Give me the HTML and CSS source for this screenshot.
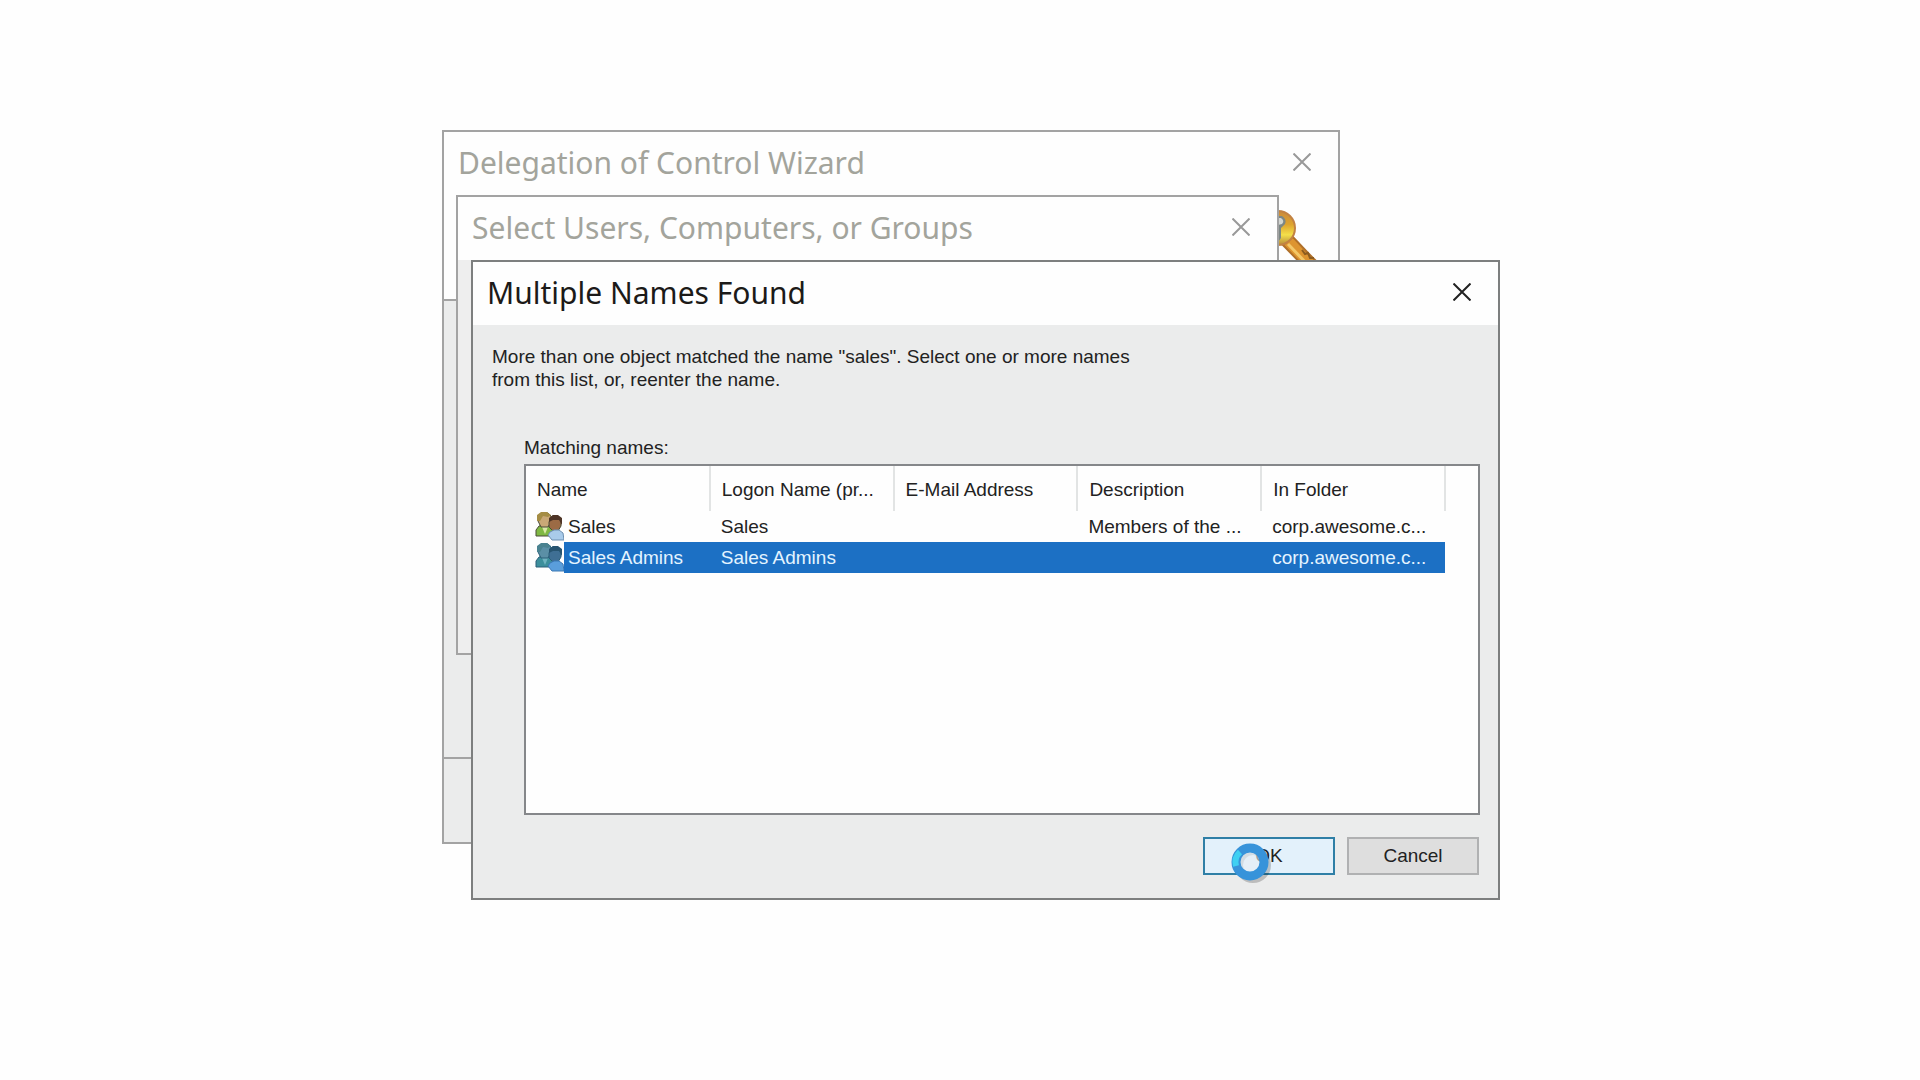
FILE: index.html
```html
<!DOCTYPE html>
<html lang="en">
<head>
<meta charset="utf-8">
<title>Multiple Names Found</title>
<link rel="stylesheet" href="styles.css">
</head>
<body>
<svg class="defs" aria-hidden="true">
  <symbol id="cross" viewBox="0 0 18 18"><path d="M0.5 0.5 L17.5 17.5 M17.5 0.5 L0.5 17.5" fill="none" stroke="currentColor" stroke-width="2"/></symbol>
  <symbol id="people" viewBox="0 0 29 29">
    <path d="M1 24V18l3-4 4-1h7l4 4 1 7z" fill="var(--shirt)" stroke="var(--line)" stroke-width="1"/>
    <path d="M7 15l3 7 3-7z" fill="var(--collar)"/>
    <path d="M3 9V4l3-3h7l3 3v6l-3 5H6z" fill="var(--skin)" stroke="var(--line)" stroke-width="1"/>
    <path d="M2 9V3l4-3h6l4 3-3 2-5-1-3 5z" fill="var(--hair)"/>
    <path d="M14 10l3-6h6l3 4v6l-3 5h-5l-4-4z" fill="var(--skin2)" stroke="var(--line)" stroke-width="1"/>
    <path d="M14 10V6l4-3h5l4 3v7l-3-5h-6z" fill="var(--hair2)"/>
    <path d="M13 23l2-3 4-2h5l4 3 1 7H17z" fill="var(--coat)" stroke="var(--coatline)" stroke-width="1"/>
  </symbol>
</svg>
<main class="desktop">
  <section class="window wizard" aria-label="Delegation of Control Wizard">
    <header class="titlebar">
      <h2 class="title">Delegation of Control Wizard</h2>
      <button class="close" aria-label="Close"><svg><use href="#cross"/></svg></button>
    </header>
    <div class="banner">
      <svg class="key" viewBox="0 0 74 74" aria-hidden="true">
        <defs>
          <linearGradient id="gold" x1="0" y1="0" x2="0" y2="1">
            <stop offset="0" stop-color="#c98a3c"/><stop offset=".4" stop-color="#dfa42e"/><stop offset=".7" stop-color="#f4e04a"/><stop offset="1" stop-color="#b58a3c"/>
          </linearGradient>
        </defs>
        <path d="M33 36 L43 28 L58 44 L74 60 L62 66 Z" fill="#dd9430" stroke="#b0702a" stroke-width="2"/>
        <path d="M38 35 L60 58" stroke="#f3c768" stroke-width="3"/>
        <path d="M52 41l3 4 3-1 2 5 4 0" fill="none" stroke="#8c5c20" stroke-width="2"/>
        <circle cx="28" cy="19" r="17" fill="url(#gold)" stroke="#c28243" stroke-width="2"/>
        <path d="M26 7h6q5 3 3 8l-4 4v10l-5 7z" fill="#7d8785"/>
        <path d="M27 9h4q4 3 1 6l-4 1" fill="#d3d6d2"/>
      </svg>
    </div>
    <div class="wizard-body"></div>
    <footer class="wizard-footer"></footer>
  </section>

  <section class="window picker" aria-label="Select Users, Computers, or Groups">
    <header class="titlebar">
      <h2 class="title">Select Users, Computers, or Groups</h2>
      <button class="close" aria-label="Close"><svg><use href="#cross"/></svg></button>
    </header>
  </section>

  <section class="window matches" role="dialog" aria-labelledby="matches-title">
    <header class="titlebar">
      <h1 class="title" id="matches-title">Multiple Names Found</h1>
      <button class="close" aria-label="Close"><svg><use href="#cross"/></svg></button>
    </header>
    <div class="content">
      <p class="message">More than one object matched the name "sales". Select one or more names<br>from this list, or, reenter the name.</p>
      <p class="list-label" id="list-label">Matching names:</p>
      <div class="list">
        <table class="names" aria-labelledby="list-label">
          <thead>
            <tr><th>Name</th><th>Logon Name (pr...</th><th>E-Mail Address</th><th>Description</th><th>In Folder</th></tr>
          </thead>
          <tbody>
            <tr>
              <td class="name"><div class="entry"><svg class="people"><use href="#people"/></svg>Sales</div></td>
              <td>Sales</td><td></td><td>Members of the ...</td><td>corp.awesome.c...</td>
            </tr>
            <tr class="selected" aria-selected="true">
              <td class="name"><div class="entry"><svg class="people"><use href="#people"/></svg>Sales Admins</div></td>
              <td>Sales Admins</td><td></td><td></td><td>corp.awesome.c...</td>
            </tr>
          </tbody>
        </table>
      </div>
      <div class="actions">
        <div class="busy-anchor">
          <button class="button primary">OK</button>
          <svg class="busy" viewBox="0 0 44 44" aria-hidden="true">
            <circle cx="24" cy="24" r="14" fill="none" stroke="#000" stroke-opacity=".2" stroke-width="8"/>
            <circle cx="21" cy="21" r="11" fill="#e6eef5" fill-opacity=".6"/>
            <circle cx="21" cy="21" r="14" fill="none" stroke="#3793da" stroke-width="9"/>
            <path d="M7 25A14 14 0 0 1 11 11" fill="none" stroke="#3fd0f2" stroke-width="6"/>
          </svg>
        </div>
        <button class="button">Cancel</button>
      </div>
    </div>
  </section>
</main>
</body>
</html>
```
FILE: styles.css
```css
* { box-sizing: border-box; }
body { margin: 0; background: #fefefe; color: #222; font: 19px/24px "Liberation Sans", Arial, sans-serif; }
h1, h2, p { margin: 0; font-weight: 400; }
button { font: inherit; color: inherit; padding: 0; }
.defs { position: absolute; width: 0; height: 0; }
.desktop { position: relative; min-height: 100vh; overflow: hidden; }

.window { position: absolute; display: flex; flex-direction: column; border: 2px solid #a3a3a3; background: #ebecec; }
.wizard { left: calc(50% - 518px); top: 130px; width: 898px; height: 714px; }
.picker { left: calc(50% - 504px); top: 195px; width: 823px; height: 460px; background: #eeeeee; }
.matches { left: calc(50% - 489px); top: 260px; width: 1029px; border-color: #7d7f7f; }

.titlebar { display: flex; align-items: center; justify-content: space-between; height: 63px; padding: 0 27px 3px 14px; background: #fefefe; color: #a3a49c; }
.title { padding-top: 2px; font: 30px/40px "Noto Sans", "Open Sans", sans-serif; white-space: nowrap; }
.close { width: 18px; height: 18px; border: 0; background: none; color: #999; }
.close svg { display: block; width: 18px; height: 18px; }
.matches .titlebar { color: #1c1a18; }
.matches .close { color: #222; }

.banner { display: flex; justify-content: flex-end; height: 106px; padding: 14px 14px 0 0; background: #fefefe; border-bottom: 2px solid #a3a3a3; }
.key { width: 74px; height: 74px; }
.wizard-body { flex: 1; }
.wizard-footer { height: 85px; border-top: 2px solid #a3a3a3; }

.content { display: flex; flex-direction: column; padding: 20px 18px 23px 19px; }
.message { line-height: 23px; }
.list-label { margin: 45px 0 4px 32px; }
.list { height: 351px; margin-left: 32px; border: 2px solid #85878a; background: #fefefe; }
.names { width: 920px; table-layout: fixed; border-collapse: collapse; text-align: left; white-space: nowrap; }
.names th { height: 45px; padding: 3px 0 0 11px; font-weight: 400; border-right: 2px solid #e2e4e4; }
.names td { height: 31px; padding: 0 0 0 11px; }
.names .name { padding-left: 9px; }
.entry { display: flex; align-items: center; gap: 4px; }
.people { width: 29px; height: 29px;
  --shirt: #7fb843; --collar: #dbe8a8; --skin: #c9a877; --hair: #a58d45; --skin2: #9c6b45; --hair2: #4e3426; --coat: #a9cbea; --coatline: #6d8fb0; --line: #4a4d38; }
.selected { color: #e4f4ff; background: #1c70c4; }
.selected .name { background: linear-gradient(to right, #fefefe 38px, #1c70c4 38px); }
.selected .people { --shirt: #3c8f9c; --collar: #6fb3c0; --skin: #5b8fa6; --hair: #4a8290; --skin2: #3f6f94; --hair2: #275470; --coat: #5a9edb; --coatline: #3b78b4; --line: #2b5f78; }

.actions { display: flex; justify-content: flex-end; gap: 12px; margin: 22px 1px 0 0; }
.busy-anchor { position: relative; }
.button { width: 132px; height: 38px; border: 2px solid #b0b1b2; background: #dedede; }
.button.primary { border-color: #2f7fa6; background: #e3f1fb; }
.busy { position: absolute; left: 26px; top: 4px; width: 44px; height: 44px; }
```
